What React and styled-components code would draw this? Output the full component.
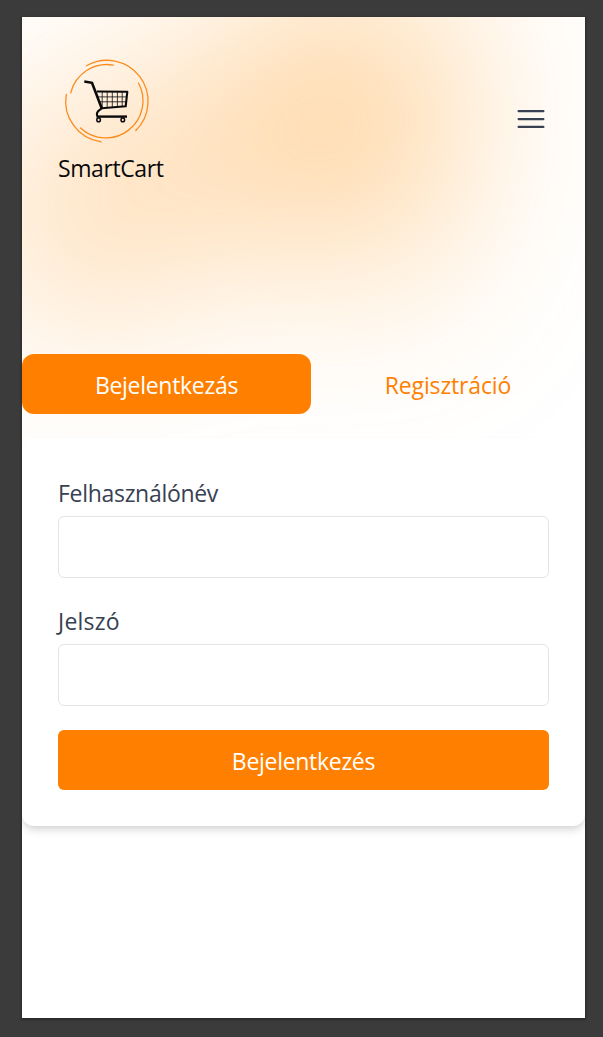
import React from "react";
import styled, { createGlobalStyle } from "styled-components";

const GlobalStyle = createGlobalStyle`
  *, *::before, *::after { box-sizing: border-box; }
  body {
    margin: 0;
    background: #3b3b3b;
    font-family: "Open Sans", "Noto Sans", sans-serif;
  }
`;

const Stage = styled.div`
  height: 1037px;
  padding: 17px 18px 19px 22px;
  overflow: hidden;
`;

const Screen = styled.main`
  position: relative;
  isolation: isolate;
  display: flex;
  flex-direction: column;
  height: 1001px;
  overflow: hidden;
  background: #fff;
`;

const Frame = styled.div`
  box-shadow: 0 1px 2px 1px rgba(0, 0, 0, 0.3);
`;

const Glow = styled.div`
  position: absolute;
  z-index: -1;
  top: -226px;
  left: 0;
  right: 0;
  overflow: hidden;
  filter: blur(96px);
`;

const GlowShape = styled.div`
  position: relative;
  left: calc(50% - 274px);
  width: 867px;
  aspect-ratio: 1155 / 678;
  transform: translateX(-50%) rotate(30deg);
  background: linear-gradient(to top right, #ff8400, #ff9000);
  opacity: 0.47;
  clip-path: polygon(
    74.1% 44.1%, 100% 61.6%, 97.5% 26.9%, 85.5% 0.1%, 80.7% 2%, 72.5% 32.5%,
    60.2% 62.4%, 52.4% 68.1%, 47.5% 58.3%, 45.2% 34.5%, 27.5% 76.7%,
    0.1% 64.9%, 17.9% 100%, 27.6% 76.8%, 76.1% 97.7%, 74.1% 44.1%
  );
`;

const Header = styled.header`
  display: flex;
  align-items: center;
  justify-content: space-between;
  height: 204px;
  padding: 0 36px;
`;

const Brand = styled.div`
  display: flex;
  flex-direction: column;
  color: #0a0a0a;
  font-size: 23px;
  line-height: 36px;
  letter-spacing: -0.4px;
`;

const BrandName = styled.span`
  height: 36px;
  padding-top: 1px;
`;

const Logo = styled.svg`
  display: block;
  width: 96px;
  height: 96px;
`;

const MenuButton = styled.button`
  display: flex;
  padding: 0;
  border: 0;
  background: none;
  color: #374151;
`;

const Tabs = styled.nav`
  display: flex;
  margin-top: 133px;
`;

const Tab = styled.button`
  width: ${({ $active }) => ($active ? "289px" : "274px")};
  height: 60px;
  padding: 1px 0 0;
  border: 0;
  border-radius: 12px;
  background: ${({ $active }) => ($active ? "#ff8000" : "transparent")};
  color: ${({ $active }) => ($active ? "#fff" : "#ff8000")};
  font: 400 23px/36px "Open Sans", "Noto Sans", sans-serif;
  letter-spacing: ${({ $active }) => ($active ? "-0.3px" : "-0.15px")};
`;

const Card = styled.form`
  display: flex;
  flex-direction: column;
  gap: 24px;
  margin-top: 24px;
  padding: 36px;
  border-radius: 12px;
  background: #fff;
  box-shadow: 0 6px 9px -1px rgba(0, 0, 0, 0.1), 0 3px 6px -2px rgba(0, 0, 0, 0.1);
`;

const Field = styled.label`
  display: flex;
  flex-direction: column;
  gap: 6px;
  color: #374151;
  font-size: 23px;
  line-height: 36px;
`;

const FieldName = styled.span`
  padding-top: 1px;
  height: 36px;
  letter-spacing: ${({ $tracking }) => $tracking};
`;

const Input = styled.input`
  height: 62px;
  padding: 12px 18px;
  border: 1px solid #e5e5e5;
  border-radius: 6px;
  background: #fff;
  font: inherit;
  outline: none;
`;

const Submit = styled.button`
  height: 60px;
  padding: 1px 0 0;
  border: 0;
  border-radius: 6px;
  background: #ff8000;
  color: #fff;
  font: 400 23px/36px "Open Sans", "Noto Sans", sans-serif;
  letter-spacing: -0.3px;
`;

function CartLogo() {
  return (
    <Logo viewBox="58 52.5 96 96" fill="none" aria-hidden="true">
      <g stroke="#fb8c1e" strokeWidth="1.3" strokeLinecap="round">
        <path d="M86.5 65.3A41 41 0 0 1 135.8 130" />
        <path d="M70.7 92.3A37.2 37.2 0 0 1 113.3 64.6" />
        <path d="M66.3 93.8A41 41 0 0 0 101 141.3" />
        <path d="M138.5 82.5A37.2 37.2 0 0 1 80.5 127.5" />
      </g>
      <g stroke="#0a0a0a">
        <path d="M84.3 81L92 82.3L101.8 108" strokeWidth="2.6" />
        <path d="M96.8 91L127.3 91.3L125.7 105.8L101.8 107.8C98 110 95.5 112 97.3 115.6" strokeWidth="2.1" strokeLinejoin="round" />
        <path d="M96.5 116.1H127" strokeWidth="2.4" />
        <path d="M98 96.4H126.6M100 101.3H126M102.2 91.5V107M107.2 91.5V107M112.3 91.5V106.5M117.4 91.5V106.5M122.2 91.5V106" strokeWidth="0.8" />
        <circle cx="98.6" cy="119.4" r="1.8" strokeWidth="1.5" />
        <circle cx="122.8" cy="119.4" r="1.8" strokeWidth="1.5" />
      </g>
    </Logo>
  );
}

function MenuIcon() {
  return (
    <svg width="36" height="36" viewBox="0 0 24 24" fill="none" stroke="currentColor" strokeWidth="1.5" strokeLinecap="round" aria-hidden="true">
      <path d="M3.75 6.75h16.5M3.75 12h16.5M3.75 17.25h16.5" />
    </svg>
  );
}

export default function App() {
  return (
    <Stage>
      <GlobalStyle />
      <Frame>
        <Screen>
          <Glow>
            <GlowShape />
          </Glow>
          <Header>
            <Brand>
              <CartLogo />
              <BrandName>SmartCart</BrandName>
            </Brand>
            <MenuButton aria-label="Menü">
              <MenuIcon />
            </MenuButton>
          </Header>
          <Tabs>
            <Tab $active>Bejelentkezás</Tab>
            <Tab>Regisztráció</Tab>
          </Tabs>
          <Card>
            <Field>
              <FieldName $tracking="-0.3px">Felhasználónév</FieldName>
              <Input type="text" />
            </Field>
            <Field>
              <FieldName $tracking="0.2px">Jelszó</FieldName>
              <Input type="password" />
            </Field>
            <Submit type="button">Bejelentkezés</Submit>
          </Card>
        </Screen>
      </Frame>
    </Stage>
  );
}
